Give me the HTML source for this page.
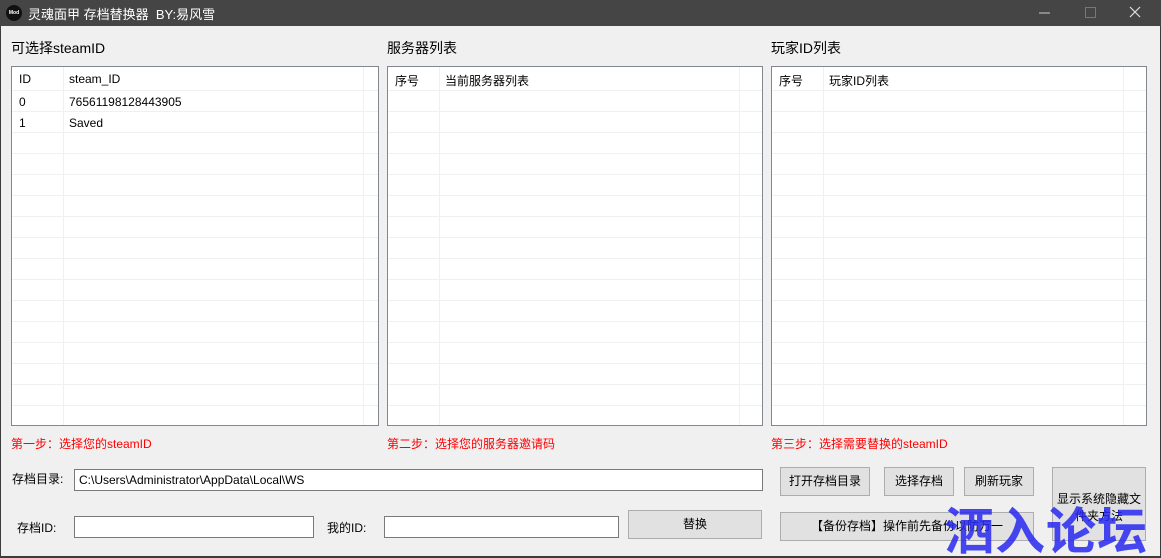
<!DOCTYPE html>
<html><head><meta charset="utf-8"><style>
*{margin:0;padding:0;box-sizing:border-box}
html{width:1161px;height:558px;overflow:hidden}
body{width:1161px;height:558px;background:#3c3c3c;font-family:"Liberation Sans","Noto Sans CJK SC",sans-serif;font-size:12px;color:#000;position:relative;overflow:hidden}
.title{position:absolute;left:0;top:0;width:1161px;height:26px;background:#454545;color:#fff;font-size:13px}
.title .logo{position:absolute;left:6px;top:5px;width:16px;height:16px;border-radius:50%;background:#111;color:#fff;font-size:5px;line-height:16px;text-align:center;font-weight:bold}
.title .t{position:absolute;left:28px;top:4px}
.body{position:absolute;left:1px;top:26px;width:1159px;height:530px;background:#f0f0f0}
.a{position:absolute;white-space:nowrap}
.h{font-size:14px}
.tbl{position:absolute;background:#fff;border:1px solid #828790;overflow:hidden}
.row{position:absolute;left:0;right:0;height:21px;border-bottom:1px solid #f0f0f0}
.vl{position:absolute;top:0;bottom:0;width:1px;background:#f0f0f0}
.red{color:#f00;font-size:12px}
.btn{position:absolute;background:#e1e1e1;border:1px solid #adadad;text-align:center;font-size:12px}
.inp{position:absolute;background:#fff;border:1px solid #7a7a7a;height:22px;padding:3px 4px;font-size:12px}
.wm{position:absolute;left:944px;top:500px;font-size:50px;font-weight:bold;color:rgba(40,40,240,0.85);letter-spacing:1px;font-family:"Noto Sans CJK SC",sans-serif;line-height:56px;white-space:nowrap}
</style></head><body>
<div class="title"><div class="logo">Mod</div><div class="t">灵魂面甲 存档替换器&nbsp;&nbsp;BY:易风雪</div>
<svg style="position:absolute;left:1030px;top:6px" width="120" height="14">
<line x1="9" y1="7" x2="20" y2="7" stroke="#ccc" stroke-width="1"/>
<rect x="55.5" y="1.5" width="10" height="10" fill="none" stroke="#777"/>
<line x1="100" y1="1" x2="110" y2="11" stroke="#ddd" stroke-width="1.2"/><line x1="110" y1="1" x2="100" y2="11" stroke="#ddd" stroke-width="1.2"/>
</svg></div>
<div class="body"></div>
<div class="a h" style="left:11px;top:38px">可选择steamID</div>
<div class="a h" style="left:387px;top:38px">服务器列表</div>
<div class="a h" style="left:771px;top:38px">玩家ID列表</div>

<div class="tbl" style="left:11px;top:66px;width:368px;height:360px">
<div class="row" style="top:0;height:24px"></div>
<div class="vl" style="left:51px"></div><div class="vl" style="left:351px"></div>
<div class="a" style="left:7px;top:5px">ID</div><div class="a" style="left:57px;top:5px">steam_ID</div>
<div class="row" style="top:24px"></div><div class="a" style="left:7px;top:28px">0</div><div class="a" style="left:57px;top:28px">76561198128443905</div>
<div class="row" style="top:45px"></div><div class="a" style="left:7px;top:49px">1</div><div class="a" style="left:57px;top:49px">Saved</div>
<div class="row" style="top:66px"></div><div class="row" style="top:87px"></div><div class="row" style="top:108px"></div><div class="row" style="top:129px"></div><div class="row" style="top:150px"></div><div class="row" style="top:171px"></div><div class="row" style="top:192px"></div><div class="row" style="top:213px"></div><div class="row" style="top:234px"></div><div class="row" style="top:255px"></div><div class="row" style="top:276px"></div><div class="row" style="top:297px"></div><div class="row" style="top:318px"></div>
</div>

<div class="tbl" style="left:387px;top:66px;width:376px;height:360px">
<div class="row" style="top:0;height:24px"></div>
<div class="vl" style="left:51px"></div><div class="vl" style="left:351px"></div>
<div class="a" style="left:7px;top:5px">序号</div><div class="a" style="left:57px;top:5px">当前服务器列表</div>
<div class="row" style="top:24px"></div><div class="row" style="top:45px"></div><div class="row" style="top:66px"></div><div class="row" style="top:87px"></div><div class="row" style="top:108px"></div><div class="row" style="top:129px"></div><div class="row" style="top:150px"></div><div class="row" style="top:171px"></div><div class="row" style="top:192px"></div><div class="row" style="top:213px"></div><div class="row" style="top:234px"></div><div class="row" style="top:255px"></div><div class="row" style="top:276px"></div><div class="row" style="top:297px"></div><div class="row" style="top:318px"></div>
</div>

<div class="tbl" style="left:771px;top:66px;width:376px;height:360px">
<div class="row" style="top:0;height:24px"></div>
<div class="vl" style="left:51px"></div><div class="vl" style="left:351px"></div>
<div class="a" style="left:7px;top:5px">序号</div><div class="a" style="left:57px;top:5px">玩家ID列表</div>
<div class="row" style="top:24px"></div><div class="row" style="top:45px"></div><div class="row" style="top:66px"></div><div class="row" style="top:87px"></div><div class="row" style="top:108px"></div><div class="row" style="top:129px"></div><div class="row" style="top:150px"></div><div class="row" style="top:171px"></div><div class="row" style="top:192px"></div><div class="row" style="top:213px"></div><div class="row" style="top:234px"></div><div class="row" style="top:255px"></div><div class="row" style="top:276px"></div><div class="row" style="top:297px"></div><div class="row" style="top:318px"></div>
</div>

<div class="a red" style="left:11px;top:435px">第一步：选择您的steamID</div>
<div class="a red" style="left:387px;top:435px">第二步：选择您的服务器邀请码</div>
<div class="a red" style="left:771px;top:435px">第三步：选择需要替换的steamID</div>

<div class="a" style="left:12px;top:470px">存档目录:</div>
<div class="inp" style="left:74px;top:469px;width:689px">C:\Users\Administrator\AppData\Local\WS</div>
<div class="a" style="left:17px;top:519px">存档ID:</div>
<div class="inp" style="left:74px;top:516px;width:240px"></div>
<div class="a" style="left:327px;top:519px">我的ID:</div>
<div class="inp" style="left:384px;top:516px;width:235px"></div>
<div class="btn" style="left:628px;top:510px;width:134px;height:29px;line-height:27px">替换</div>
<div class="btn" style="left:780px;top:467px;width:90px;height:29px;line-height:27px">打开存档目录</div>
<div class="btn" style="left:884px;top:467px;width:70px;height:29px;line-height:27px">选择存档</div>
<div class="btn" style="left:964px;top:467px;width:70px;height:29px;line-height:27px">刷新玩家</div>
<div class="btn" style="left:1052px;top:467px;width:94px;height:74px;padding-top:23px;line-height:17px">显示系统隐藏文件夹方法</div>
<div class="btn" style="left:780px;top:512px;width:254px;height:29px;line-height:27px">【备份存档】操作前先备份以防万一</div>
<div class="wm">洒入论坛</div>
</body></html>
